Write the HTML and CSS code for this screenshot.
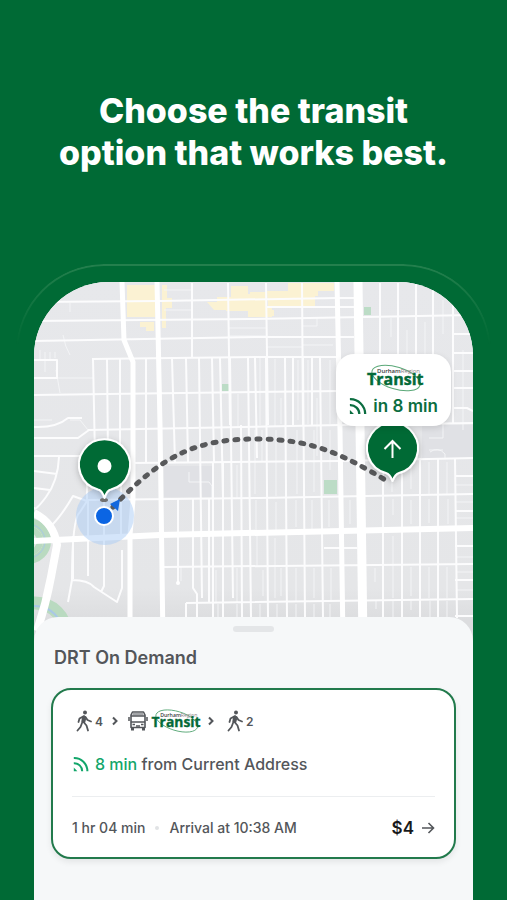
FILE: index.html
```html
<!DOCTYPE html>
<html lang="en">
<head>
<meta charset="utf-8">
<meta name="viewport" content="width=device-width, initial-scale=1">
<title>DRT On Demand</title>
<link rel="stylesheet" href="styles.css">
</head>
<body>
<main class="promo">
  <h1 class="headline">Choose the transit<br>option that works best.</h1>
  <div class="device">
    <section class="screen">
      <div class="map">
        <svg class="map-art" viewBox="34 282 439 360" aria-hidden="true">
          <defs>
            <linearGradient id="land" x1="0" y1="0" x2="0" y2="1">
              <stop offset="0" stop-color="#e7e8eb"/><stop offset=".85" stop-color="#e5e6e8"/><stop offset=".94" stop-color="#dcdddf"/>
            </linearGradient>
            <filter id="soft" x="-30%" y="-30%" width="160%" height="160%"><feDropShadow dx="0" dy="2" stdDeviation="3" flood-opacity=".22"/></filter>
          </defs>
          <rect x="34" y="282" width="439" height="360" fill="url(#land)"/>
          <!-- parks and districts -->
          <g fill="#fbf2d3">
            <path d="M127 285h28v32h-28zM140 322h14v9h-8v-4h-6zM162 285h5v13h5v10h-6v20h-4zM207 302h10v-5h14v-11h17v8h18v14h6v9h-24v-6h-22v-1h-12zM250 292h16v6h-16zM267 291h21v-8h46v8h-16v5h-3v10h-47zM267 310h7v6h-7z"/>
          </g>
          <path d="M222 384h7v7h-7zM324 480h13v14h-13zM364 307h7v8h-7z" fill="#bcdcc6"/>
          <g fill="none">
            <circle cx="28" cy="541" r="19" stroke="#b9dac0" stroke-width="8"/>
            <circle cx="28" cy="541" r="12" stroke="#b9dac0" stroke-width="6"/>
            <circle cx="28" cy="541" r="17" stroke="#a9c8e6" stroke-width="1"/>
            <circle cx="35" cy="634" r="31" stroke="#b9dac0" stroke-width="13"/>
            <circle cx="35" cy="634" r="28" stroke="#a9c8e6" stroke-width="2"/>
          </g>
          <path d="M164 466h49v31h-49zM422 425h51v33h-51z" fill="#e0e1e5"/>
          <!-- lanes -->
          <g fill="none" stroke="#f3f4f6" stroke-width="1">
            <path d="M164 290h28M164 310h28M228 328h38M228 336h38M267 347h36M303 326h14v-9M303 345h30M63 335q2 12 7 20M40 350v9M45 352v20M50 352v8M55 352v6M56 370l4 23M34 420h18M70 420h10l8 10M189 472v10h20l3 4v12M213 470v28M70 303v9M35 378h58"/>
            <path d="M238 394v32M260 358v67M275 359v67M281 398v26M298 360v60M308 360v64M317 398v58M330 360v64M255 430v64M262 430v32M276 430v66M297 430v64M314 430v62M330 430v40M391 318v19M407 330v24M425 322v34M443 300v34M463 350v80M392 460v32M411 464v25M429 462v32M447 462v32"/>
            <path d="M237 465v33M256 500v30M276 502v28M296 500v27M312 500v29M329 500v27M350 500v24M393 499v16M411 500v24M429 499v24M448 499v25M181 567v14M216 570v32M237 568v35M257 535v31M263 570v26M275 538v60M281 568v28M296 568v34M314 568v30M331 568v33M375 568v14M393 536v62M411 567v29M429 567v31M447 567v31M218 604v14M237 604v14M260 604v14M277 604v14M296 604v14M314 604v14M330 604v14M376 601v8M393 601v16M411 601v9M430 601v16M447 601v16"/>
            <path d="M429 438h14v-14M429 450h14M430 452q8-6 15 2v5M455 485h18M455 502h18M455 518h18M456 557h18M456 572h18M456 590h18"/>
          </g>
          <!-- streets -->
          <g fill="none" stroke="#fcfcfd" stroke-width="2" stroke-linejoin="round">
            <path d="M34 302L160 301L336 298L354 298M34 321L250 319L473 315M34 341L260 337L354 337M92 359L260 357L340 357M34 395L340 391M88 430L340 425L473 423M34 456H86M133 463L340 461L473 458M86 500L260 498L473 494M164 567L473 564M186 603L473 599M266 307H354"/>
            <path d="M192 283v74M228 283l2 142M266 283l2 142M302 283l1 142M380 283v75M398 283v75M416 283v75M433 283v75M453 300v124M453 334h20M453 353h20M453 371h20M453 388h20M453 408h14l6 3"/>
            <path d="M93 359l2 98M107 359l1 97M120 359v100M146 358v105M172 358l3 105M186 358l2 105M199 358l3 240M212 358l2 105M220 358l3 140M230 358l3 240M248 358l3 260M241 425l1 193M255 358l2 100M266 358l2 260M285 358l2 260M303 358l2 260M320 358l3 260M293 358v67M312 358v67"/>
            <path d="M383 458v160M402 458v160M420 458v160M438 458v160M455 458l2 160M455 476h18M455 511h18M455 546h18M455 580h18M455 616h18M223 463v155M213 463v155M324 548h33M178 498v85M193 498v90l4 6v24M209 498v105M186 603v15"/>
            <path d="M34 360H57V378H34M34 438H78L89 430M59 457Q58 481 46 497T34 507M34 471L57 474M34 488L50 490M34 427q22 1 34-9h14M52 525Q62 515 73 496L87 501V463M87 501L80 512Q72 518 72 580Q88 580 94 587L117 602L122 588V550M88 500V576M104 500V586L101 592M73 536V579M72 580L68 602M121 460V535"/>
          </g>
          <circle cx="178" cy="583" r="2" fill="#fff"/>
          <!-- main roads -->
          <g fill="none" stroke="#fff" stroke-linejoin="round">
            <path d="M122 282L124 340L133 362V500L130 535V642M157 282L160 425L163 642" stroke-width="5"/>
            <path d="M337 282L340 430L343 642" stroke-width="5"/>
            <path d="M358 282L363 642" stroke-width="9"/>
            <path d="M34 541L160 535L473 528" stroke-width="6"/>
            <path d="M34 513Q54 523 57 545L51 577Q46 604 37 631" stroke-width="8"/>
          </g>
          <!-- rider location -->
          <circle cx="105" cy="516" r="29" fill="#a9cbf6" opacity=".5"/>
          <ellipse cx="104" cy="500" rx="4" ry="2" fill="#777"/>
          <path d="M113 507C165 452 200 439 257 439S345 456 387 481" fill="none" stroke="#58595b" stroke-width="5" stroke-linecap="round" stroke-dasharray="3 8"/>
          <path d="M110 504L120 499L118 511Z" fill="#1267dd"/>
          <circle cx="104" cy="516" r="9" fill="#0b65e3" stroke="#fff" stroke-width="2"/>
          <!-- pins -->
          <g filter="url(#soft)" fill="#006a35" stroke="#fff" stroke-width="2" stroke-linejoin="round">
            <path d="M104.500 498Q102 490 98 489.500A25.500 25.500 0 1 1 111 489.500Q107 490 104.500 498Z"/>
            <path d="M392.500 481Q390 474 386 473A25.500 25.500 0 1 1 399 473Q395 474 392.500 481Z"/>
          </g>
          <circle cx="104.500" cy="466" r="7" fill="#fff"/>
          <path d="M392.500 458V441M384.500 449L392.500 441L400.500 449" fill="none" stroke="#fff" stroke-width="2"/>
        </svg>
        <div class="eta">
          <svg class="logo logo-large" viewBox="0 0 60 32" role="img" aria-label="Durham Region Transit"><use href="#drt"/></svg>
          <div class="eta-line">
            <svg class="live" viewBox="0 0 20 20" aria-hidden="true"><use href="#signal"/></svg>
            <span>in 8 min</span>
          </div>
        </div>
      </div>
      <section class="sheet">
        <div class="handle"></div>
        <h2 class="sheet-title">DRT On Demand</h2>
        <article class="trip">
          <div class="legs">
            <svg class="walk" viewBox="0 0 16 22" aria-hidden="true"><use href="#walker"/></svg>
            <span class="mins">4</span>
            <svg class="chevron first" viewBox="0 0 6 10" aria-hidden="true"><use href="#next"/></svg>
            <svg class="bus" viewBox="0 0 20 20" aria-hidden="true">
              <path d="M4.500 1H15.500L17 4V16.500H3V4Z" fill="#fff" stroke="#53565a" stroke-width="1.600" stroke-linejoin="round"/>
              <path d="M4.500 2H15.500V4.500H4.500Z" fill="#a3a5a8"/>
              <path d="M3 5H17M3 11H17M1 6V10M19 6V10" fill="none" stroke="#53565a" stroke-width="1.500"/>
              <path d="M4.500 13.500H7M13 13.500H15.500M8 15H12" stroke="#53565a" stroke-width="1.400"/>
              <path d="M3 17H6V19.500H3ZM14 17H17V19.500H14Z" fill="#53565a"/>
            </svg>
            <svg class="logo" viewBox="0 0 60 32" role="img" aria-label="Durham Region Transit"><use href="#drt"/></svg>
            <svg class="chevron second" viewBox="0 0 6 10" aria-hidden="true"><use href="#next"/></svg>
            <svg class="walk" viewBox="0 0 16 22" aria-hidden="true"><use href="#walker"/></svg>
            <span class="mins">2</span>
          </div>
          <div class="pickup">
            <svg class="live small" viewBox="0 0 20 20" aria-hidden="true"><use href="#signal"/></svg>
            <p><span class="soon">8 min</span> from Current Address</p>
          </div>
          <div class="summary">
            <span>1 hr 04 min</span><i class="dot"></i><span>Arrival at 10:38 AM</span>
            <strong class="fare">$4</strong>
            <svg class="arrow" viewBox="0 0 14 12" aria-hidden="true"><path d="M1 6H12.500M7.500 1L12.500 6L7.500 11" fill="none" stroke="#53565a" stroke-width="1.600"/></svg>
          </div>
        </article>
      </section>
    </section>
  </div>
</main>
<svg class="symbols" aria-hidden="true">
  <symbol id="drt" viewBox="0 0 60 32">
    <ellipse cx="32" cy="16" rx="25" ry="11" transform="rotate(17 32 16)" fill="none" stroke="#5aa878" stroke-width="1"/>
    <text x="13" y="11" class="logo-top"><tspan class="durham">Durham</tspan><tspan class="region">Region</tspan></text>
    <text x="3" y="23" class="logo-main">Transit</text>
  </symbol>
  <symbol id="signal" viewBox="0 0 20 20">
    <g fill="none" stroke="currentColor" stroke-width="2.500"><path d="M1 2.500A16.500 16.500 0 0 1 18 19"/><path d="M1 9A10 10 0 0 1 11.500 19"/></g>
    <path d="M1 14.500L5.500 19H1Z" fill="currentColor"/>
  </symbol>
  <symbol id="walker" viewBox="0 0 16 22">
    <circle cx="9" cy="2.500" r="2" fill="#53565a"/>
    <path d="M6.500 6.500L9.500 6L10 9.500L9 13L6 12Z" fill="#53565a"/>
    <path d="M8 6L3.500 8.500L2.500 12M9.500 7L11.500 10L15 11.500M7 7L6 13L4.500 17L1.500 20.500M7.500 12L10.500 15.500L12 20.500" fill="none" stroke="#53565a" stroke-width="1.800" stroke-linecap="round" stroke-linejoin="round"/>
  </symbol>
  <symbol id="next" viewBox="0 0 6 10"><path d="M1 1.500L4.500 5L1 8.500" fill="none" stroke="#53565a" stroke-width="2"/></symbol>
</svg>
</body>
</html>
```
FILE: styles.css
```css
* { box-sizing: border-box; }
body {
  margin: 0;
  background: #006a35;
  font-family: Inter, "Liberation Sans", sans-serif;
  color: #53565a;
}
h1, h2, p { margin: 0; }
svg { display: block; flex: none; }
.promo {
  min-height: 100vh;
  display: flex;
  flex-direction: column;
  padding-top: 90px;
}
.headline {
  color: #fff;
  font-size: 34px;
  line-height: 42px;
  font-weight: 800;
  text-align: center;
}
.device {
  position: relative;
  flex: 1;
  display: flex;
  margin-top: 90px;
  padding: 18px 18px 0;
  margin-inline: 16px;
}
.device::before {
  content: "";
  position: absolute;
  inset: 0 0 auto;
  height: 110px;
  border: 2px solid #24804e;
  border-bottom: 0;
  border-radius: 88px 88px 0 0;
  mask-image: linear-gradient(#000, transparent 80px);
}
.screen {
  flex: 1;
  min-width: 0;
  display: flex;
  flex-direction: column;
  overflow: hidden;
  border-radius: 74px 74px 0 0;
  background: #f6f8f9;
}
.map { position: relative; }
.map-art { width: 100%; height: auto; }
.eta {
  position: absolute;
  top: 20%;
  right: 5%;
  width: 115px;
  height: 72px;
  padding-top: 8px;
  display: flex;
  flex-direction: column;
  align-items: center;
  border-radius: 18px;
  background: #fff;
  box-shadow: 0 2px 6px rgb(0 0 0 / 12%);
  color: #0b6d40;
}
.eta-line {
  display: flex;
  align-items: center;
  gap: 6px;
  font-size: 17px;
  line-height: 24px;
  font-weight: 600;
}
.live { width: 18px; height: 18px; }
.live.small { width: 16px; height: 16px; color: #12a66a; }
.logo { width: 52px; height: 28px; }
.logo-large { width: 60px; height: 32px; }
.logo-main { font: 700 16px "Open Sans", sans-serif; fill: #046a38; stroke: #046a38; stroke-width: 0.4px; }
.logo-top { font: 6px "Open Sans", sans-serif; }
.durham { fill: #3b3d40; font-weight: 600; }
.region { fill: #8b7f86; }
.symbols { display: none; }
.sheet {
  position: relative;
  flex: 1;
  margin-top: -25px;
  padding: 9px 17px 40px;
  border-radius: 24px 24px 0 0;
  background: #f6f8f9;
}
.handle {
  width: 41px;
  height: 6px;
  margin: 0 auto;
  border-radius: 3px;
  background: #e4e6e8;
}
.sheet-title {
  margin: 14px 3px 18px;
  font-size: 18px;
  line-height: 24px;
  font-weight: 600;
}
.trip {
  padding: 17px 19px 18px;
  border: 2px solid #227a4c;
  border-radius: 20px;
  background: #fff;
  box-shadow: 0 3px 6px rgb(0 0 0 / 8%);
}
.legs {
  display: flex;
  align-items: center;
  height: 28px;
  padding-left: 4px;
}
.walk { width: 16px; height: 22px; }
.mins { margin-left: 3px; font-size: 12px; font-weight: 600; }
.chevron { width: 6px; height: 10px; }
.first { margin: 0 10px 0 9px; }
.second { margin: 0 13px 0 7px; }
.bus { width: 20px; height: 20px; margin-right: 1px; }
.pickup {
  display: flex;
  align-items: center;
  gap: 6px;
  margin-top: 17px;
  padding-left: 1px;
  font-size: 16px;
  line-height: 24px;
  font-weight: 500;
}
.soon { color: #12a66a; }
.summary {
  display: flex;
  align-items: center;
  margin-top: 20px;
  padding-top: 20px;
  border-top: 1px solid #eceef0;
  font-size: 14px;
  line-height: 22px;
  font-weight: 500;
}
.dot { width: 4px; height: 4px; margin: 0 10px; border-radius: 50%; background: #e1e3e5; }
.fare { margin-left: auto; margin-right: 7px; color: #18191b; font-size: 17px; font-weight: 600; }
.arrow { width: 14px; height: 12px; }
```
